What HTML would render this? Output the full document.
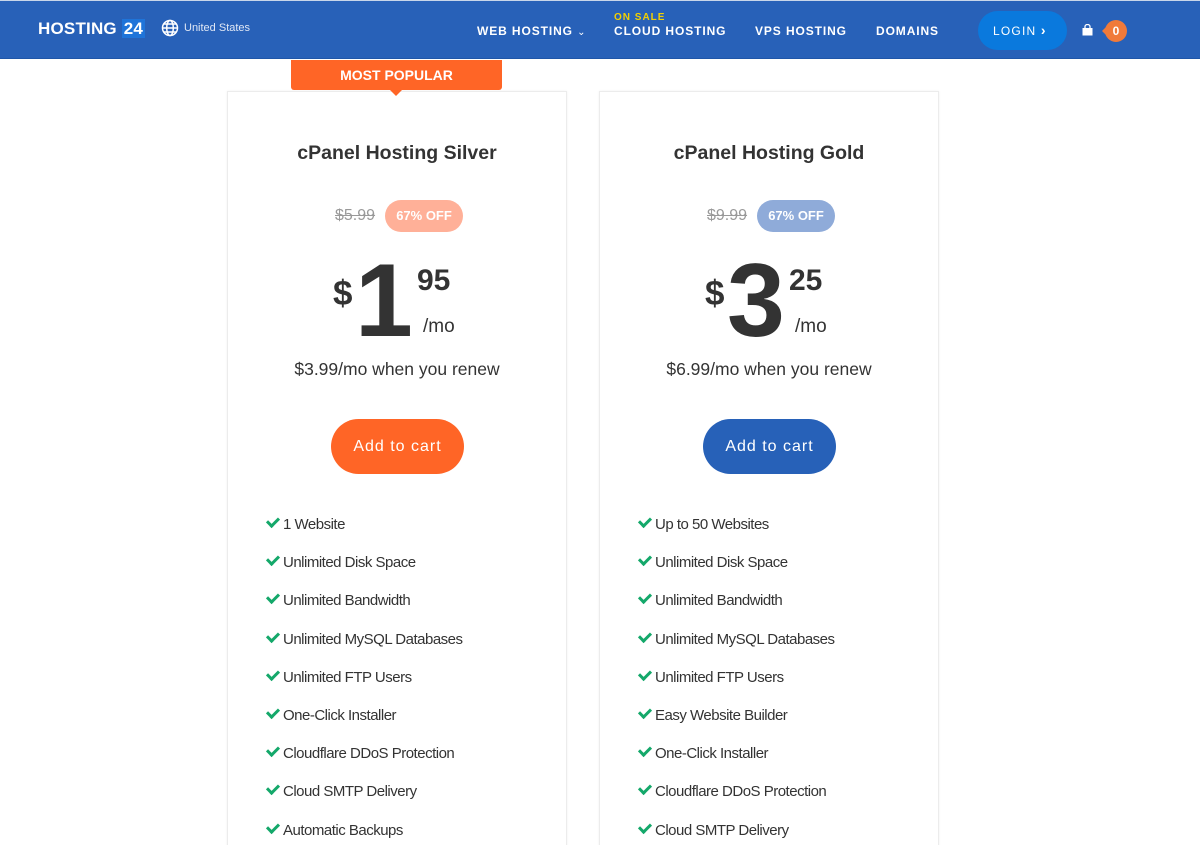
<!DOCTYPE html>
<html><head><meta charset="utf-8"><style>
*{margin:0;padding:0;box-sizing:border-box}
html,body{width:1200px;height:845px;overflow:hidden}
body{background:#fff;font-family:"Liberation Sans",Arial,sans-serif;color:#333;position:relative}
.hdr{position:absolute;left:0;top:0;width:1200px;height:59px;background:#2861b8;border-top:1px solid #c9d6ea;border-bottom:1px solid #1f56a8}
.abs{position:absolute;white-space:nowrap}
.nav{color:#fff;font-weight:bold;font-size:12px;letter-spacing:0.9px;top:23px}
.card{position:absolute;top:91px;width:340px;height:760px;border:1px solid #ececec;box-shadow:0 0 3px rgba(0,0,0,.05);background:#fff}
.t{position:absolute;left:0;width:100%;text-align:center;font-weight:bold;font-size:19.5px;top:50px;color:#333}
.old{position:absolute;font-size:16px;color:#999;text-decoration:line-through;top:115px}
.off{position:absolute;top:108px;height:32px;width:78px;border-radius:16px;color:#fff;font-weight:bold;font-size:13px;text-align:center;line-height:32px}
.dol{position:absolute;top:182px;font-size:35px;font-weight:bold}
.big{position:absolute;top:157px;font-size:104px;font-weight:bold;line-height:1}
.cents{position:absolute;top:172px;font-size:30px;font-weight:bold}
.mo{position:absolute;top:224px;font-size:19px}
.ren{position:absolute;left:0;width:100%;text-align:center;top:267px;font-size:17.5px}
.btn{position:absolute;left:103px;top:327px;width:133px;height:55px;border-radius:28px;color:#fff;font-size:16px;letter-spacing:1px;text-align:center;line-height:55px}
ul{position:absolute;left:38px;top:424px;list-style:none}
li{height:38.2px;font-size:15px;letter-spacing:-0.5px;color:#333}
li:before{content:"";display:inline-block;width:9px;height:5px;border-left:3px solid #14a86a;border-bottom:3px solid #14a86a;transform:rotate(-45deg);margin:0 4px 4px 1px}
</style></head><body>
<div class="hdr">
<div class="abs" style="left:38px;top:18px;color:#fff;font-weight:bold;font-size:17px;letter-spacing:0.2px">HOSTING <span style="background:#1f74d9;padding:0 2px">24</span></div>
<svg class="abs" style="left:161px;top:18px" width="18" height="18" viewBox="0 0 18 18" fill="none" stroke="#fff" stroke-width="1.5"><circle cx="9" cy="9" r="7.5"/><ellipse cx="9" cy="9" rx="3.3" ry="7.5"/><path d="M1.5 9h15M3 5h12M3 13h12"/></svg>
<div class="abs" style="left:184px;top:21px;color:#dfe7f5;font-size:11px">United States</div>
<div class="abs nav" style="left:477px">WEB HOSTING <span style="font-weight:normal;font-size:10px">⌄</span></div>
<div class="abs" style="left:614px;top:11px;color:#f3d000;font-weight:bold;font-size:10px;letter-spacing:1px">ON SALE</div>
<div class="abs nav" style="left:614px">CLOUD HOSTING</div>
<div class="abs nav" style="left:755px">VPS HOSTING</div>
<div class="abs nav" style="left:876px">DOMAINS</div>
<div class="abs" style="left:978px;top:10px;width:89px;height:39px;border-radius:20px;background:#0a79dd;color:#fff;font-size:12px;letter-spacing:1.2px;line-height:39px;padding-left:15px">LOGIN <b style="font-size:14px">›</b></div>
<svg class="abs" style="left:1082px;top:23px" width="11" height="12" viewBox="0 0 11 12"><path d="M3 4V2.5a2.5 2 0 0 1 5 0V4" fill="none" stroke="#fff" stroke-width="1.3"/><rect x="0.5" y="4" width="10" height="7.5" fill="#fff"/></svg>
<div class="abs" style="left:1102px;top:22px;width:0;height:0;border:8px solid transparent;border-right-color:#f07a3a;border-left:0"></div>
<div class="abs" style="left:1105px;top:19px;width:22px;height:22px;border-radius:11px;background:#f07a3a;color:#fff;font-weight:bold;font-size:12px;text-align:center;line-height:22px">0</div>
</div>

<div class="card" style="left:227px">
<div class="t">cPanel Hosting Silver</div>
<div class="old" style="left:107px">$5.99</div>
<div class="off" style="left:157px;background:#ffb098">67% OFF</div>
<div class="dol" style="left:105px">$</div>
<div class="big" style="left:127px">1</div>
<div class="cents" style="left:189px">95</div>
<div class="mo" style="left:195px">/mo</div>
<div class="ren">$3.99/mo when you renew</div>
<div class="btn" style="background:#ff6526">Add to cart</div>
<ul><li>1 Website</li><li>Unlimited Disk Space</li><li>Unlimited Bandwidth</li><li>Unlimited MySQL Databases</li><li>Unlimited FTP Users</li><li>One-Click Installer</li><li>Cloudflare DDoS Protection</li><li>Cloud SMTP Delivery</li><li>Automatic Backups</li></ul>
</div>
<div class="abs" style="left:291px;top:60px;width:211px;height:30px;background:#ff6526;border-radius:0 0 3px 3px;color:#fff;font-weight:bold;font-size:14px;text-align:center;line-height:30px">MOST POPULAR</div>
<div class="abs" style="left:390px;top:90px;width:0;height:0;border:6px solid transparent;border-top-color:#ff6526;border-bottom:0"></div>

<div class="card" style="left:599px">
<div class="t">cPanel Hosting Gold</div>
<div class="old" style="left:107px">$9.99</div>
<div class="off" style="left:157px;background:#8fabd9">67% OFF</div>
<div class="dol" style="left:105px">$</div>
<div class="big" style="left:127px">3</div>
<div class="cents" style="left:189px">25</div>
<div class="mo" style="left:195px">/mo</div>
<div class="ren">$6.99/mo when you renew</div>
<div class="btn" style="background:#2761b8">Add to cart</div>
<ul><li>Up to 50 Websites</li><li>Unlimited Disk Space</li><li>Unlimited Bandwidth</li><li>Unlimited MySQL Databases</li><li>Unlimited FTP Users</li><li>Easy Website Builder</li><li>One-Click Installer</li><li>Cloudflare DDoS Protection</li><li>Cloud SMTP Delivery</li></ul>
</div>
</body></html>
